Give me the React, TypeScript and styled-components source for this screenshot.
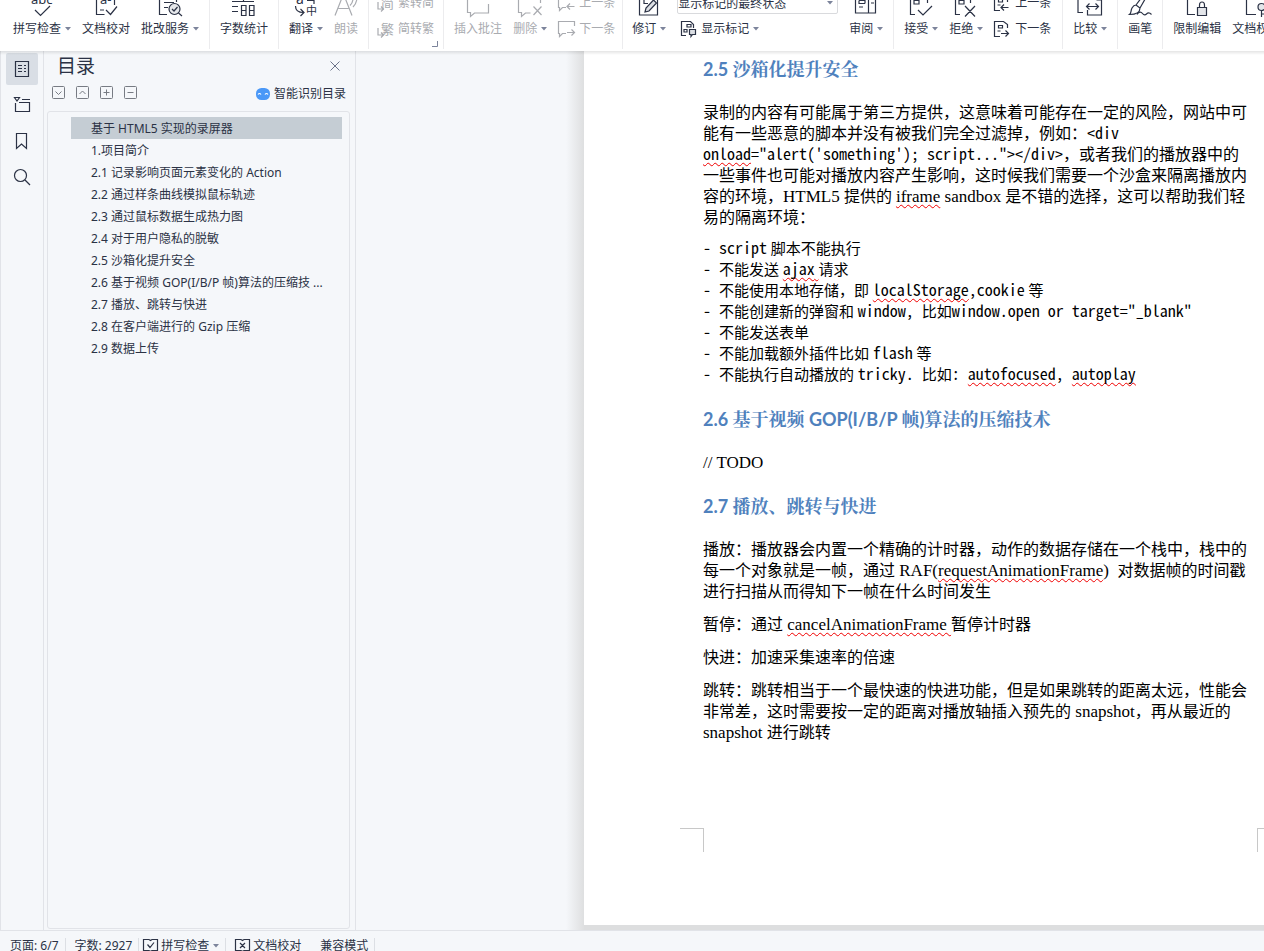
import React from 'react';
import styled, { createGlobalStyle, css } from 'styled-components';

const ink = '#2b3245';
const muted = '#a9abb0';
const line = '#e1e3e8';
const panel = '#f5f7fa';

const GlobalStyle = createGlobalStyle`
  * { box-sizing: border-box; }
  body { margin: 0; background: ${panel}; overflow: hidden; }
  body, button, select {
    font-family: "Noto Sans", "Noto Sans CJK SC", sans-serif;
    font-size: 12px;
    color: ${ink};
  }
  button { border: 0; padding: 0; margin: 0; background: none; white-space: nowrap; }
  svg { display: block; flex: none; overflow: visible; }
`;

const Window = styled.div`
  display: flex;
  flex-direction: column;
  height: 100vh;
`;

/* ---------- ribbon ---------- */

const Ribbon = styled.header`
  display: flex;
  flex: none;
  height: 51px;
  padding-left: 3px;
  background: #fff;
  overflow: hidden;
  position: relative;
  z-index: 1;
`;

const RibbonShade = styled.div`
  flex: none;
  height: 4px;
  margin-bottom: -4px;
  background: linear-gradient(rgba(0, 0, 0, 0.1), rgba(0, 0, 0, 0));
  position: relative;
  z-index: 2;
`;

const Group = styled.div<{ $left?: number; $right?: number }>`
  display: flex;
  flex: none;
  align-items: flex-end;
  gap: 11px;
  margin-bottom: 2px;
  padding: 0 ${p => p.$right ?? 10}px 12px ${p => p.$left ?? 10}px;
  border-right: 1px solid #ececee;
  position: relative;
`;

const LargeButton = styled.button<{ $off?: boolean }>`
  display: flex;
  flex-direction: column;
  align-items: center;
  gap: 4px;
  color: ${p => (p.$off ? muted : ink)};
`;

const Caption = styled.span`
  display: flex;
  align-items: center;
  gap: 3px;
  line-height: 16px;
`;

const Stack = styled.div`
  display: flex;
  flex-direction: column;
  gap: 10px;
`;

const SmallButton = styled.button<{ $off?: boolean; $inset?: boolean }>`
  display: flex;
  align-items: center;
  gap: 4px;
  height: 16px;
  padding-left: ${p => (p.$inset ? 4 : 0)}px;
  line-height: 16px;
  color: ${p => (p.$off ? muted : ink)};
`;

const Launcher = styled.button`
  position: absolute;
  right: 5px;
  bottom: 2px;
`;

const ComboBox = styled.div`
  display: flex;
  align-items: center;
  width: 161px;
  height: 22px;
  margin-bottom: -3px;
  padding-right: 4px;
  border: 1px solid #d9dadd;
  border-radius: 2px;
`;

const Combo = styled.select`
  flex: 1;
  appearance: none;
  border: 0;
  padding: 0;
  background: transparent;
`;

const Arrow = () => (
  <svg width="7" height="4" viewBox="0 0 7 4"><path d="M1 0h6L4 3.5z" fill="#7c849b" /></svg>
);

const Pic = ({ size = 24, children }: { size?: number; children: React.ReactNode }) => (
  <svg width={size} height={size} viewBox={`0 0 ${size} ${size}`} fill="none" stroke="currentColor" strokeWidth="1.2">
    {children}
  </svg>
);

const Letters = ({ x, y, size, children }: { x: number; y: number; size: number; children: string }) => (
  <text x={x} y={y} fontSize={size} fill="currentColor" stroke="none">{children}</text>
);

const Large = ({ label, icon, menu, off }: { label: string; icon: React.ReactNode; menu?: boolean; off?: boolean }) => (
  <LargeButton type="button" $off={off} disabled={off && !menu}>
    <Pic>{icon}</Pic>
    <Caption>{label}{menu && <Arrow />}</Caption>
  </LargeButton>
);

const icons = {
  spell: <><Letters x={1} y={11} size={13}>abc</Letters><path d="M5 17l5.500 5.500L20 13" /></>,
  proof: <><path d="M2.500 0v21.500h8M6 17h4M20.500 0v12M12 17l4.500 4.500 6.500-8" /><Letters x={6} y={11} size={13}>a-</Letters></>,
  review: <><path d="M1.500 0v21.500H9M6 9.500h10M6 14.500h4M18.500 0v9" /><circle cx="16.500" cy="16" r="5.500" fill="#e6e8eb" /><path d="M14 16l2 2 3.500-4M20.500 20l3.500 3" /></>,
  count: <path d="M0 8.500h22M11.500 0v8.500M0 13.500h6M0 18.500h6M9.500 12.500h4.500v10H9.500zM9.500 17.500h4.500M17.500 12.500h4.500v10h-4.500zM17.500 17.500h4.500" />,
  translate: <><Letters x={2} y={11} size={14}>a</Letters><Letters x={12} y={22} size={11}>中</Letters><path d="M1.500 13c0 4 2 6.500 8 6.500M6.500 16l3.500 3.500L6.500 23M13 7.500h7V11" /></>,
  read: <path d="M1 22.500L9.500 1 18 22.500M4.500 15.500h10M16 12.500c2-2 3-4 3-7M19 14c2.500-2.500 4-6 4-10" />,
  comment: <path d="M1.500 0v19.500h3v4l4-3.500h14V11M20 6l3-3" />,
  remove: <path d="M.500 0v19.500h3v4l4-3.500h5M22.500 0v10M15.500 13.500l8 8.500M23.500 13.500l-8 8.500" />,
  revise: <><path d="M2.500 0v22h18V7M7 7v3.500h4" /><path d="M8 19l1-4 7.500-8 3 3-7.500 8z" fill="#dcdfe4" /></>,
  inspect: <path d="M1.500 0v20h20V0M14.500 0v20M5 7.500h6v3M5 7.500v3h6M5 14h4M17 10h3" />,
  accept: <path d="M1.500 0v21.500H6M5 7.500h5v3.500H5zM18.500 0v10M9 17l5 5 9-9" />,
  reject: <path d="M1.500 0v21.500H6M5 7.500h5v3.500H5zM16.500 0v10M11 13l10 10.500M21 13L11 23.500" />,
  compare: <path d="M14 2v5M5 19.500H0V0M9.500 17v5h14V7h-5M8.500 13.500h12M11.500 10.500l-3 3 3 3M17.500 10.500l3 3-3 3" />,
  brush: <path d="M8 12L17 0c2-2 4-1 3 1l-8 14M8 12l4 3c0 4-4 6.500-10.500 6.500 2-1.500 1-3.500 2.500-6.500 1-1.800 2.500-3 4-3zM9 21.500c2-3 4-3 5.500-1s3 1.500 4 .5 2.500-2 5 .5" />,
  lock: <><path d="M2.500 0v21.500H10M19.500 0v6" /><path d="M12.500 14.500h9v8h-9z" fill="#e4e6ea" /><path d="M14.500 14.500V12c0-4 5-4 5 0v2.500" /></>,
  rights: <><path d="M2.500 0v21.500H12M20.500 0v6" /><circle cx="17.500" cy="14" r="3.500" fill="#e4e6ea" /><path d="M17.500 17.500V24M17.500 21h3" /></>,
};

const BubbleArrow = ({ back }: { back?: boolean }) => (
  <Pic size={17}><path d="M8 12.500H4.500L1.500 15.500v-3H.5V.5h16V5" /><path d={back ? 'M16.500 11.500H9M12 8.500l-3 3 3 3' : 'M9 11.500h7.500M13.500 8.500l3 3-3 3'} /></Pic>
);

const DocArrow = ({ back }: { back?: boolean }) => (
  <Pic size={17}><path d="M6 15.500H.5V.5h9l4 3V7M4.500 4.500h4v2.500h-4zM3.500 10h3" /><path d={back ? 'M14.500 12.500H7M10 9.500l-3 3 3 3' : 'M7 12.500h7.500M11.500 9.500l3 3-3 3'} /></Pic>
);

const Convert = ({ glyph }: { glyph: string }) => (
  <Pic size={17}><Letters x={4} y={13} size={13}>{glyph}</Letters><path d="M1 7v7h5M4 11.500l2.500 2.500L4 16.500" /></Pic>
);

/* ---------- body ---------- */

const Body = styled.div`
  display: flex;
  flex: 1;
  min-height: 0;
`;

const Rail = styled.nav`
  display: flex;
  flex: none;
  flex-direction: column;
  align-items: center;
  gap: 4px;
  width: 44px;
  padding-top: 2px;
  border: solid ${line};
  border-width: 0 1px;
`;

const RailButton = styled.button<{ $on?: boolean }>`
  display: grid;
  place-items: center;
  width: 32px;
  height: 32px;
  border-radius: 2px;
  ${p => p.$on && css`background: #d9dee5;`}
`;

const Outline = styled.aside`
  display: flex;
  flex: none;
  flex-direction: column;
  width: 312px;
  border-right: 1px solid ${line};
`;

const TitleRow = styled.div`
  display: flex;
  align-items: center;
  justify-content: space-between;
  height: 30px;
  padding: 0 15px 0 13px;
`;

const Title = styled.h2`
  margin: 0;
  font-size: 19px;
  font-weight: 400;
  line-height: 28px;
`;

const Tools = styled.div`
  display: flex;
  align-items: center;
  gap: 11px;
  height: 30px;
  padding: 0 9px 7px 8px;
`;

const Detect = styled.button`
  display: flex;
  align-items: center;
  gap: 4px;
  margin-left: auto;
  padding-top: 2px;
  line-height: 16px;
`;

const Tree = styled.ul`
  flex: 1;
  margin: 0 5px 1px 3px;
  padding: 5px 7px 0 23px;
  border: 1px solid ${line};
  border-radius: 3px;
  list-style: none;
`;

const TreeLink = styled.a<{ $on?: boolean }>`
  display: block;
  padding: 2px 0 0 20px;
  line-height: 20px;
  white-space: nowrap;
  color: inherit;
  text-decoration: none;
  background: ${p => (p.$on ? '#c5cdd4' : 'none')};
`;

const Desk = styled.main`
  display: flex;
  flex: 1;
  min-width: 0;
  overflow: hidden;
  background: ${panel};
`;

const Gutter = styled.div`
  flex: none;
  width: 228px;
  background: linear-gradient(to left, #dedfe0, ${panel} 18px);
`;

const PaperTray = styled.div`
  display: flex;
  flex: none;
  padding-bottom: 5px;
  background: #dddedf;
`;

const Paper = styled.article`
  display: flex;
  flex-direction: column;
  width: 792px;
  padding: 6px 0 73px;
  background: #fff;
  color: #000;
  font-family: "Liberation Serif", "Noto Sans CJK SC", serif;
  font-size: 16px;
  line-height: 21px;
  white-space: nowrap;
`;

const Heading = styled.h3`
  margin: 21px 119px;
  color: #4f81bd;
  font-family: Lato, "Noto Serif CJK SC", "Noto Sans CJK SC", sans-serif;
  font-size: 18px;
  font-weight: 700;
  line-height: 24px;
  &:first-child { margin-top: 0; }
`;

const Para = styled.p`
  margin: 0 119px;
  & + & { margin-top: 12px; }
`;

const List = styled.ul`
  margin: 11px 119px 0;
  padding: 0;
  list-style: none;
  font-size: 15px;
`;

const Code = styled.code`
  font-family: "Noto Sans Mono CJK SC", "DejaVu Sans Mono", monospace;
  font-size: 16px;
  line-height: 1;
`;

const Latin = styled.span`
  font-size: 17px;
  line-height: 1;
`;

const Typo = styled.span`
  text-decoration: underline wavy #f00000 1px;
  text-underline-offset: 2px;
  text-decoration-skip-ink: none;
`;

const MarginMarks = styled.div`
  display: flex;
  justify-content: space-between;
  margin: auto 95px 0 96px;
`;

const Mark = styled.i<{ $right?: boolean }>`
  width: 24px;
  height: 24px;
  border: solid #c8c8c8;
  border-width: ${p => (p.$right ? '1px 0 0 1px' : '1px 1px 0 0')};
`;

/* ---------- status bar ---------- */

const Status = styled.footer`
  flex: none;
  height: 21px;
  border-top: 1px solid ${line};
  overflow: hidden;
`;

const StatusRow = styled.div`
  display: flex;
  align-items: center;
  height: 30px;
  padding-left: 1px;
`;

const StatusItem = styled.button<{ $plain?: boolean; $icon?: boolean }>`
  display: flex;
  align-items: center;
  gap: 3px;
  height: 16px;
  padding: 0 ${p => (p.$plain ? 9 : 6)}px 0 ${p => (p.$icon ? 4 : 9)}px;
  line-height: 16px;
  border-right: 1px solid ${p => (p.$plain ? 'transparent' : '#dcdfe4')};
`;

const outline = [
  '基于 HTML5 实现的录屏器',
  '1.项目简介',
  '2.1 记录影响页面元素变化的 Action',
  '2.2 通过样条曲线模拟鼠标轨迹',
  '2.3 通过鼠标数据生成热力图',
  '2.4 对于用户隐私的脱敏',
  '2.5 沙箱化提升安全',
  '2.6 基于视频 GOP(I/B/P 帧)算法的压缩技 ...',
  '2.7 播放、跳转与快进',
  '2.8 在客户端进行的 Gzip 压缩',
  '2.9 数据上传',
];

const boxMarks = [
  ['全部展开', 'M3.500 5.500l3 3 3-3'],
  ['全部收起', 'M3.500 8l3-3 3 3'],
  ['展开', 'M3.500 6.500h6M6.500 3.500v6'],
  ['折叠', 'M3.500 6.500h6'],
];

export default function App() {
  return (
    <Window>
      <GlobalStyle />
      <Ribbon>
        <Group>
          <Large label="拼写检查" icon={icons.spell} menu />
          <Large label="文档校对" icon={icons.proof} />
          <Large label="批改服务" icon={icons.review} menu />
        </Group>
        <Group><Large label="字数统计" icon={icons.count} /></Group>
        <Group>
          <Large label="翻译" icon={icons.translate} menu />
          <Large label="朗读" icon={icons.read} off />
        </Group>
        <Group $left={8} $right={9}>
          <Stack>
            <SmallButton type="button" $off><Convert glyph="简" />繁转简</SmallButton>
            <SmallButton type="button" $off><Convert glyph="繁" />简转繁</SmallButton>
          </Stack>
          <Launcher type="button" aria-label="更多选项">
            <svg width="6" height="6" viewBox="0 0 6 6"><path d="M5.500 0v5.500H0" fill="none" stroke="#7c849b" /></svg>
          </Launcher>
        </Group>
        <Group $right={7}>
          <Large label="插入批注" icon={icons.comment} off />
          <Large label="删除" icon={icons.remove} menu off />
          <Stack>
            <SmallButton type="button" $off><BubbleArrow back />上一条</SmallButton>
            <SmallButton type="button" $off><BubbleArrow />下一条</SmallButton>
          </Stack>
        </Group>
        <Group $left={9}>
          <Large label="修订" icon={icons.revise} menu />
          <Stack>
            <ComboBox>
              <Combo aria-label="审阅显示状态"><option>显示标记的最终状态</option></Combo>
              <Arrow />
            </ComboBox>
            <SmallButton type="button" $inset>
              <Pic size={16}><path d="M5 14.500H.500V.500h9l3 3V7M6 3.500h4v2.500H6zM3 8.500h3v2.500H3z" /><path d="M8.500 8.500h6v5h-3l-1.500 2v-2H8.500z" fill="#dcdfe4" /></Pic>
              <Caption>显示标记<Arrow /></Caption>
            </SmallButton>
          </Stack>
          <Large label="审阅" icon={icons.inspect} menu />
        </Group>
        <Group $right={11}>
          <Large label="接受" icon={icons.accept} menu />
          <Large label="拒绝" icon={icons.reject} menu />
          <Stack>
            <SmallButton type="button"><DocArrow back />上一条</SmallButton>
            <SmallButton type="button"><DocArrow />下一条</SmallButton>
          </Stack>
        </Group>
        <Group><Large label="比较" icon={icons.compare} menu /></Group>
        <Group><Large label="画笔" icon={icons.brush} /></Group>
        <Group>
          <Large label="限制编辑" icon={icons.lock} />
          <Large label="文档权限" icon={icons.rights} />
        </Group>
      </Ribbon>
      <RibbonShade />

      <Body>
        <Rail>
          <RailButton type="button" $on aria-label="目录">
            <Pic size={16}><path d="M1.500.500h13v15h-13zM4 4.500h4M10 4.500h2M4 7.500h4M10 7.500h2M4 10.500h4M10 10.500h2" /></Pic>
          </RailButton>
          <RailButton type="button" aria-label="章节">
            <Pic size={16}><path d="M.500.500h5L3 4zM8 2.500h8M1.500 6v8.500h14v-9H5" /></Pic>
          </RailButton>
          <RailButton type="button" aria-label="书签">
            <Pic size={16}><path d="M2.500.500h10v15l-5-4.500-5 4.500z" /></Pic>
          </RailButton>
          <RailButton type="button" aria-label="查找">
            <Pic size={16}><circle cx="6.500" cy="6.500" r="6" /><path d="M11 11l5 5" /></Pic>
          </RailButton>
        </Rail>

        <Outline>
          <TitleRow>
            <Title>目录</Title>
            <button type="button" aria-label="关闭">
              <svg width="10" height="10" viewBox="0 0 10 10"><path d="M.5.5l9 9M9.500.500l-9 9" stroke="#6b7389" /></svg>
            </button>
          </TitleRow>
          <Tools>
            {boxMarks.map(([name, d]) => (
              <button key={name} type="button" aria-label={name}>
                <svg width="13" height="13" viewBox="0 0 13 13" fill="none" stroke="#777b83"><rect x=".5" y=".5" width="12" height="12" rx="1" /><path d={d} /></svg>
              </button>
            ))}
            <Detect type="button">
              <svg width="14" height="12" viewBox="0 0 14 12">
                <rect width="14" height="12" rx="5.500" fill="#4a98f7" />
                <path d="M2 6.500q1.500-2 3 0M9 6.500q1.500-2 3 0" fill="none" stroke="#fff" strokeWidth="1.200" />
              </svg>
              智能识别目录
            </Detect>
          </Tools>
          <Tree>
            {outline.map((t, i) => <li key={t}><TreeLink href="#" $on={i === 0}>{t}</TreeLink></li>)}
          </Tree>
        </Outline>

        <Desk>
          <Gutter />
          <PaperTray>
            <Paper>
              <Heading>2.5 沙箱化提升安全</Heading>
              <Para>
                录制的内容有可能属于第三方提供，这意味着可能存在一定的风险，网站中可<br />
                能有一些恶意的脚本并没有被我们完全过滤掉，例如：<Code>&lt;div</Code><br />
                <Code><Typo>onload</Typo>="alert('something'); script..."&gt;&lt;/div&gt;</Code>，或者我们的播放器中的<br />
                一些事件也可能对播放内容产生影响，这时候我们需要一个沙盒来隔离播放内<br />
                容的环境，<Latin>HTML5 </Latin>提供的 <Latin> <Typo>iframe</Typo> sandbox</Latin> 是不错的选择，这可以帮助我们轻<br />
                易的隔离环境：
              </Para>
              <List>
                <li><Code>- script</Code> 脚本不能执行</li>
                <li><Code>- </Code>不能发送 <Typo><Code>ajax</Code> </Typo>请求</li>
                <li><Code>- </Code>不能使用本地存储，即 <Code><Typo>localStorage</Typo>,cookie</Code> 等</li>
                <li><Code>- </Code>不能创建新的弹窗和 <Code>window, </Code>比如<Code>window.open or target="_blank"</Code></li>
                <li><Code>- </Code>不能发送表单</li>
                <li><Code>- </Code>不能加载额外插件比如 <Code>flash</Code> 等</li>
                <li><Code>- </Code>不能执行自动播放的 <Code>tricky. </Code>比如<Code>: <Typo>autofocused</Typo>, <Typo>autoplay</Typo></Code></li>
              </List>
              <Heading>2.6 基于视频 GOP(I/B/P 帧)算法的压缩技术</Heading>
              <Para><Latin>// TODO</Latin></Para>
              <Heading>2.7 播放、跳转与快进</Heading>
              <Para>
                播放：播放器会内置一个精确的计时器，动作的数据存储在一个栈中，栈中的<br />
                每一个对象就是一帧，通过<Latin> RAF(<Typo>requestAnimationFrame</Typo>)&nbsp; </Latin>对数据帧的时间戳<br />
                进行扫描从而得知下一帧在什么时间发生
              </Para>
              <Para>暂停：通过<Latin> <Typo>cancelAnimationFrame </Typo></Latin>暂停计时器</Para>
              <Para>快进：加速采集速率的倍速</Para>
              <Para>
                跳转：跳转相当于一个最快速的快进功能，但是如果跳转的距离太远，性能会<br />
                非常差，这时需要按一定的距离对播放轴插入预先的<Latin> snapshot</Latin>，再从最近的<br />
                <Latin>snapshot </Latin>进行跳转
              </Para>
              <MarginMarks><Mark /><Mark $right /></MarginMarks>
            </Paper>
          </PaperTray>
        </Desk>
      </Body>

      <Status>
        <StatusRow>
          <StatusItem type="button">页面: 6/7</StatusItem>
          <StatusItem type="button">字数: 2927</StatusItem>
          <StatusItem type="button" $icon>
            <Pic size={15}><path d="M6 .500H.500v11H6l1.500 1L9 11.500h5.500V.500H9l-1.500 1zM4.500 5.500l2.500 3 4-5" /></Pic>
            拼写检查<Arrow />
          </StatusItem>
          <StatusItem type="button" $plain>
            <Pic size={15}><path d="M6 .500H.500v11H6l1.500 1L9 11.500h5.500V.500H9l-1.500 1zM5 4l5 5M10 4l-5 5" /></Pic>
            文档校对
          </StatusItem>
          <StatusItem type="button">兼容模式</StatusItem>
        </StatusRow>
      </Status>
    </Window>
  );
}
